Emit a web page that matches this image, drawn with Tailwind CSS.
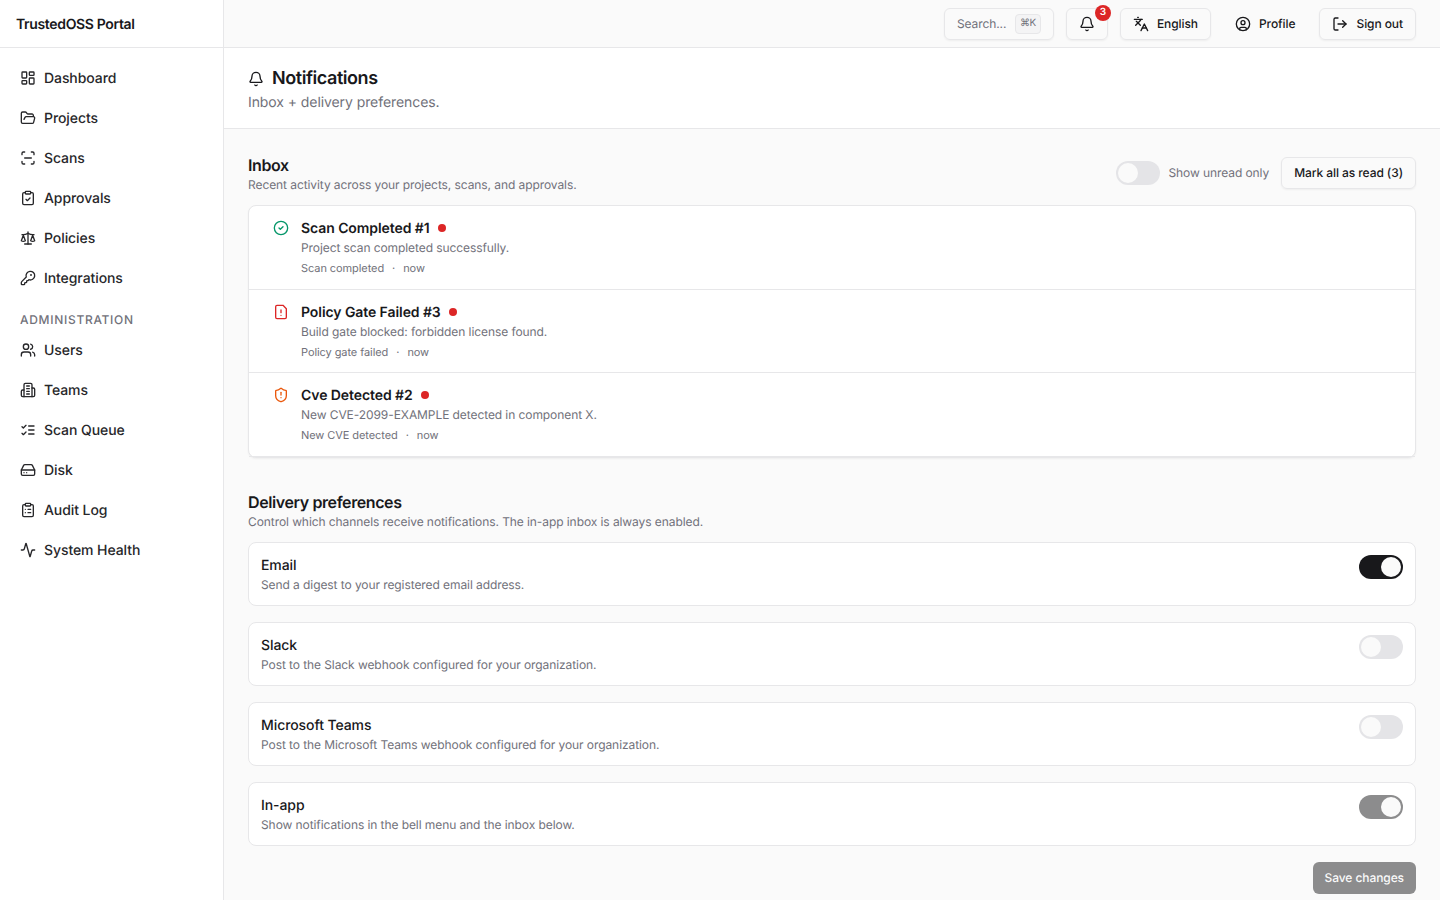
<!DOCTYPE html>
<html lang="en">
<head>
    <meta charset="UTF-8">
    <meta name="viewport" content="width=device-width, initial-scale=1.0">
    <title>Notifications - TrustedOSS Portal</title>
    <script src="https://cdn.jsdelivr.net/npm/@tailwindcss/browser@4"></script>
</head>
<body class="bg-[#fafafa] font-['Inter',sans-serif] [text-rendering:geometricPrecision] tracking-[-0.08px] antialiased text-[#18181b] h-[900px] overflow-hidden">
<div class="flex h-[900px]">

    <!-- Sidebar -->
    <aside class="w-[224px] shrink-0 bg-white border-r border-[#e7e7e9] flex flex-col">
        <div class="h-[48px] pt-[2px] border-b border-[#e7e7e9] flex items-center px-4 text-sm font-semibold tracking-tight">TrustedOSS Portal</div>
        <nav class="pt-[10px] px-2 flex flex-col text-sm font-medium text-[#27272a]">
            <a class="h-10 px-3 flex items-center gap-2"><svg class="size-4 shrink-0" viewBox="0 0 24 24" fill="none" stroke="currentColor" stroke-width="2" stroke-linecap="round" stroke-linejoin="round"><rect x="3" y="3" width="7" height="9" rx="1"/><rect x="14" y="3" width="7" height="5" rx="1"/><rect x="14" y="12" width="7" height="9" rx="1"/><rect x="3" y="16" width="7" height="5" rx="1"/></svg><span class="mt-[2px]">Dashboard</span></a>
            <a class="h-10 px-3 flex items-center gap-2"><svg class="size-4 shrink-0" viewBox="0 0 24 24" fill="none" stroke="currentColor" stroke-width="2" stroke-linecap="round" stroke-linejoin="round"><path d="m6 14 1.5-2.9A2 2 0 0 1 9.24 10H20a2 2 0 0 1 1.94 2.5l-1.54 6a2 2 0 0 1-1.95 1.5H4a2 2 0 0 1-2-2V5a2 2 0 0 1 2-2h3.9a2 2 0 0 1 1.69.9l.81 1.2a2 2 0 0 0 1.67.9H18a2 2 0 0 1 2 2v2"/></svg><span class="mt-[2px]">Projects</span></a>
            <a class="h-10 px-3 flex items-center gap-2"><svg class="size-4 shrink-0" viewBox="0 0 24 24" fill="none" stroke="currentColor" stroke-width="2" stroke-linecap="round" stroke-linejoin="round"><path d="M3 7V5a2 2 0 0 1 2-2h2"/><path d="M17 3h2a2 2 0 0 1 2 2v2"/><path d="M21 17v2a2 2 0 0 1-2 2h-2"/><path d="M7 21H5a2 2 0 0 1-2-2v-2"/><path d="M7 12h10"/></svg><span class="mt-[2px]">Scans</span></a>
            <a class="h-10 px-3 flex items-center gap-2"><svg class="size-4 shrink-0" viewBox="0 0 24 24" fill="none" stroke="currentColor" stroke-width="2" stroke-linecap="round" stroke-linejoin="round"><rect x="8" y="2" width="8" height="4" rx="1"/><path d="M16 4h2a2 2 0 0 1 2 2v14a2 2 0 0 1-2 2H6a2 2 0 0 1-2-2V6a2 2 0 0 1 2-2h2"/><path d="m9 14 2 2 4-4"/></svg><span class="mt-[2px]">Approvals</span></a>
            <a class="h-10 px-3 flex items-center gap-2"><svg class="size-4 shrink-0" viewBox="0 0 24 24" fill="none" stroke="currentColor" stroke-width="2" stroke-linecap="round" stroke-linejoin="round"><path d="m16 16 3-8 3 8c-.87.65-1.92 1-3 1s-2.13-.35-3-1Z"/><path d="m2 16 3-8 3 8c-.87.65-1.92 1-3 1s-2.13-.35-3-1Z"/><path d="M7 21h10"/><path d="M12 3v18"/><path d="M3 7h2c2 0 5-1 7-2 2 1 5 2 7 2h2"/></svg><span class="mt-[2px]">Policies</span></a>
            <a class="h-10 px-3 flex items-center gap-2"><svg class="size-4 shrink-0" viewBox="0 0 24 24" fill="none" stroke="currentColor" stroke-width="2" stroke-linecap="round" stroke-linejoin="round"><path d="M2.586 17.414A2 2 0 0 0 2 18.828V21a1 1 0 0 0 1 1h3a1 1 0 0 0 1-1v-1a1 1 0 0 1 1-1h1a1 1 0 0 0 1-1v-1a1 1 0 0 1 1-1h.172a2 2 0 0 0 1.414-.586l.814-.814a6.5 6.5 0 1 0-4-4z"/><circle cx="16.5" cy="7.5" r=".5" fill="currentColor"/></svg><span class="mt-[2px]">Integrations</span></a>

            <div class="mt-[14px] mb-[2px] h-[16px] px-3 flex items-center text-xs font-medium tracking-[0.7px] text-[#71717a]">ADMINISTRATION</div>

            <a class="h-10 px-3 flex items-center gap-2"><svg class="size-4 shrink-0" viewBox="0 0 24 24" fill="none" stroke="currentColor" stroke-width="2" stroke-linecap="round" stroke-linejoin="round"><path d="M16 21v-2a4 4 0 0 0-4-4H6a4 4 0 0 0-4 4v2"/><circle cx="9" cy="7" r="4"/><path d="M22 21v-2a4 4 0 0 0-3-3.87"/><path d="M16 3.13a4 4 0 0 1 0 7.75"/></svg><span class="mt-[2px]">Users</span></a>
            <a class="h-10 px-3 flex items-center gap-2"><svg class="size-4 shrink-0" viewBox="0 0 24 24" fill="none" stroke="currentColor" stroke-width="2" stroke-linecap="round" stroke-linejoin="round"><path d="M6 22V4a2 2 0 0 1 2-2h8a2 2 0 0 1 2 2v18Z"/><path d="M6 12H4a2 2 0 0 0-2 2v6a2 2 0 0 0 2 2h2"/><path d="M18 9h2a2 2 0 0 1 2 2v9a2 2 0 0 1-2 2h-2"/><path d="M10 6h4"/><path d="M10 10h4"/><path d="M10 14h4"/><path d="M10 18h4"/></svg><span class="mt-[2px]">Teams</span></a>
            <a class="h-10 px-3 flex items-center gap-2"><svg class="size-4 shrink-0" viewBox="0 0 24 24" fill="none" stroke="currentColor" stroke-width="2" stroke-linecap="round" stroke-linejoin="round"><path d="m3 17 2 2 4-4"/><path d="m3 7 2 2 4-4"/><path d="M13 6h8"/><path d="M13 12h8"/><path d="M13 18h8"/></svg><span class="mt-[2px]">Scan Queue</span></a>
            <a class="h-10 px-3 flex items-center gap-2"><svg class="size-4 shrink-0" viewBox="0 0 24 24" fill="none" stroke="currentColor" stroke-width="2" stroke-linecap="round" stroke-linejoin="round"><line x1="22" y1="12" x2="2" y2="12"/><path d="M5.45 5.11 2 12v6a2 2 0 0 0 2 2h16a2 2 0 0 0 2-2v-6l-3.45-6.89A2 2 0 0 0 16.76 4H7.24a2 2 0 0 0-1.79 1.11z"/><line x1="6" y1="16" x2="6.01" y2="16"/><line x1="10" y1="16" x2="10.01" y2="16"/></svg><span class="mt-[2px]">Disk</span></a>
            <a class="h-10 px-3 flex items-center gap-2"><svg class="size-4 shrink-0" viewBox="0 0 24 24" fill="none" stroke="currentColor" stroke-width="2" stroke-linecap="round" stroke-linejoin="round"><rect x="8" y="2" width="8" height="4" rx="1"/><path d="M16 4h2a2 2 0 0 1 2 2v14a2 2 0 0 1-2 2H6a2 2 0 0 1-2-2V6a2 2 0 0 1 2-2h2"/><path d="M12 11h4"/><path d="M12 16h4"/><path d="M8 11h.01"/><path d="M8 16h.01"/></svg><span class="mt-[2px]">Audit Log</span></a>
            <a class="h-10 px-3 flex items-center gap-2"><svg class="size-4 shrink-0" viewBox="0 0 24 24" fill="none" stroke="currentColor" stroke-width="2" stroke-linecap="round" stroke-linejoin="round"><path d="M22 12h-2.48a2 2 0 0 0-1.93 1.46l-2.35 8.36a.25.25 0 0 1-.48 0L9.24 2.18a.25.25 0 0 0-.48 0l-2.35 8.36A2 2 0 0 1 4.49 12H2"/></svg><span class="mt-[2px]">System Health</span></a>
        </nav>
    </aside>

    <div class="flex-1 min-w-0 flex flex-col">
        <!-- Top bar -->
        <header class="h-[48px] shrink-0 border-b border-[#e7e7e9] bg-[#fafafa] flex items-center justify-end gap-3 px-6 text-xs font-medium">
            <div class="w-[110px] h-8 rounded-md border border-[#e7e7e9] flex items-center justify-between px-3 text-[#71717a] font-normal shadow-xs">
                <span>Search...</span>
                <span class="w-[26px] h-5 rounded-sm border border-[#e7e7e9] bg-[#f4f4f5] flex items-center justify-center text-[10px] tracking-[-0.5px]">⌘K</span>
            </div>
            <div class="relative w-[42px] h-8 rounded-md border border-[#e7e7e9] flex items-center justify-center shadow-xs">
                <svg class="size-4" viewBox="0 0 24 24" fill="none" stroke="currentColor" stroke-width="2" stroke-linecap="round" stroke-linejoin="round"><path d="M10.268 21a2 2 0 0 0 3.464 0"/><path d="M3.262 15.326A1 1 0 0 0 4 17h16a1 1 0 0 0 .74-1.673C19.41 13.956 18 12.499 18 8A6 6 0 0 0 6 8c0 4.499-1.411 5.956-2.738 7.326"/></svg>
                <span class="absolute -top-[4px] right-[-4px] size-4 rounded-full bg-[#dc2626] text-white text-[10px] font-semibold flex items-center justify-center">3</span>
            </div>
            <div class="h-8 px-3 rounded-md border border-[#e7e7e9] flex items-center gap-2 shadow-xs">
                <svg class="size-4" viewBox="0 0 24 24" fill="none" stroke="currentColor" stroke-width="2" stroke-linecap="round" stroke-linejoin="round"><path d="m5 8 6 6"/><path d="m4 14 6-6 2-3"/><path d="M2 5h12"/><path d="M7 2h1"/><path d="m22 22-5-10-5 10"/><path d="M14 18h6"/></svg>
                English
            </div>
            <div class="h-8 px-3 rounded-md flex items-center gap-2">
                <svg class="size-4" viewBox="0 0 24 24" fill="none" stroke="currentColor" stroke-width="2" stroke-linecap="round" stroke-linejoin="round"><circle cx="12" cy="12" r="10"/><circle cx="12" cy="10" r="3"/><path d="M7 20.662V19a2 2 0 0 1 2-2h6a2 2 0 0 1 2 2v1.662"/></svg>
                Profile
            </div>
            <div class="h-8 px-3 rounded-md border border-[#e7e7e9] flex items-center gap-2 shadow-xs">
                <svg class="size-4" viewBox="0 0 24 24" fill="none" stroke="currentColor" stroke-width="2" stroke-linecap="round" stroke-linejoin="round"><path d="m16 17 5-5-5-5"/><path d="M21 12H9"/><path d="M9 21H5a2 2 0 0 1-2-2V5a2 2 0 0 1 2-2h4"/></svg>
                Sign out
            </div>
        </header>

        <!-- Page title -->
        <div class="h-[81px] shrink-0 bg-white border-b border-[#e7e7e9] px-6 pt-[17px]">
            <h1 class="flex items-center gap-2 text-lg leading-[28px] font-semibold tracking-tight">
                <svg class="size-4" viewBox="0 0 24 24" fill="none" stroke="currentColor" stroke-width="2" stroke-linecap="round" stroke-linejoin="round"><path d="M10.268 21a2 2 0 0 0 3.464 0"/><path d="M3.262 15.326A1 1 0 0 0 4 17h16a1 1 0 0 0 .74-1.673C19.41 13.956 18 12.499 18 8A6 6 0 0 0 6 8c0 4.499-1.411 5.956-2.738 7.326"/></svg>
                Notifications
            </h1>
            <p class="text-sm leading-[20px] text-[#71717a]">Inbox + delivery preferences.</p>
        </div>

        <main class="flex-1 px-6 pt-6">
            <!-- Inbox -->
            <div class="flex items-center justify-between h-[40px] mb-[12px]">
                <div>
                    <h2 class="text-base leading-[24px] font-semibold tracking-tight">Inbox</h2>
                    <p class="text-xs leading-[16px] text-[#71717a]">Recent activity across your projects, scans, and approvals.</p>
                </div>
                <div class="flex items-center gap-3">
                    <div class="flex items-center gap-2">
                        <span class="w-[44px] h-[24px] rounded-full bg-[#e4e4e7] p-[2px] flex"><span class="size-5 rounded-full bg-[#fafafa]"></span></span>
                        <span class="text-xs text-[#71717a]">Show unread only</span>
                    </div>
                    <div class="h-8 px-3 rounded-md border border-[#e7e7e9] flex items-center text-xs font-medium shadow-xs">Mark all as read (3)</div>
                </div>
            </div>

            <div class="rounded-lg border border-[#e7e7e9] bg-white shadow-xs h-[253px] flex flex-col">
                <div class="h-[84px] border-b border-[#e7e7e9] pl-6 pt-[12px] flex gap-[12px]">
                    <svg class="size-4 mt-[2px] text-[#059669] shrink-0" viewBox="0 0 24 24" fill="none" stroke="currentColor" stroke-width="2" stroke-linecap="round" stroke-linejoin="round"><circle cx="12" cy="12" r="10"/><path d="m9 12 2 2 4-4"/></svg>
                    <div>
                        <div class="h-5 flex items-center gap-2 text-sm leading-[20px] font-semibold"><span class="mt-[2px]">Scan Completed #1</span><span class="size-2 rounded-full bg-[#dc2626]"></span></div>
                        <p class="text-xs leading-[20px] text-[#71717a]">Project scan completed successfully.</p>
                        <p class="text-[11px] leading-[20px] text-[#71717a]">Scan completed<span class="mx-2">·</span>now</p>
                    </div>
                </div>
                <div class="h-[83px] border-b border-[#e7e7e9] pl-6 pt-[12px] flex gap-[12px]">
                    <svg class="size-4 mt-[2px] text-[#dc2626] shrink-0" viewBox="0 0 24 24" fill="none" stroke="currentColor" stroke-width="2" stroke-linecap="round" stroke-linejoin="round"><path d="M15 2H6a2 2 0 0 0-2 2v16a2 2 0 0 0 2 2h12a2 2 0 0 0 2-2V7Z"/><path d="M12 9v4"/><path d="M12 17h.01"/></svg>
                    <div>
                        <div class="h-5 flex items-center gap-2 text-sm leading-[20px] font-semibold"><span class="mt-[2px]">Policy Gate Failed #3</span><span class="size-2 rounded-full bg-[#dc2626]"></span></div>
                        <p class="text-xs leading-[20px] text-[#71717a]">Build gate blocked: forbidden license found.</p>
                        <p class="text-[11px] leading-[20px] text-[#71717a]">Policy gate failed<span class="mx-2">·</span>now</p>
                    </div>
                </div>
                <div class="flex-1 border-b border-[#e7e7e9] pl-6 pt-[12px] flex gap-[12px]">
                    <svg class="size-4 mt-[2px] text-[#ea580c] shrink-0" viewBox="0 0 24 24" fill="none" stroke="currentColor" stroke-width="2" stroke-linecap="round" stroke-linejoin="round"><path d="M20 13c0 5-3.5 7.5-7.66 8.95a1 1 0 0 1-.67-.01C7.5 20.5 4 18 4 13V6a1 1 0 0 1 1-1c2 0 4.5-1.2 6.24-2.72a1.17 1.17 0 0 1 1.52 0C14.51 3.81 17 5 19 5a1 1 0 0 1 1 1z"/><path d="M12 8v4"/><path d="M12 16h.01"/></svg>
                    <div>
                        <div class="h-5 flex items-center gap-2 text-sm leading-[20px] font-semibold"><span class="mt-[2px]">Cve Detected #2</span><span class="size-2 rounded-full bg-[#dc2626]"></span></div>
                        <p class="text-xs leading-[20px] text-[#71717a]">New CVE-2099-EXAMPLE detected in component X.</p>
                        <p class="text-[11px] leading-[20px] text-[#71717a]">New CVE detected<span class="mx-2">·</span>now</p>
                    </div>
                </div>
            </div>

            <!-- Delivery preferences -->
            <div class="mt-[32px]">
                <h2 class="text-base leading-[24px] font-semibold tracking-tight">Delivery preferences</h2>
                <p class="text-xs leading-[16px] text-[#71717a]">Control which channels receive notifications. The in-app inbox is always enabled.</p>
            </div>

            <div class="mt-[12px] flex flex-col gap-4">
                <div class="h-16 rounded-lg border border-[#e7e7e9] bg-white px-3 pt-3 flex justify-between">
                    <div>
                        <div class="h-5 pt-px text-sm leading-[20px] font-medium">Email</div>
                        <p class="text-xs leading-[20px] text-[#71717a]">Send a digest to your registered email address.</p>
                    </div>
                    <span class="w-[44px] h-[24px] rounded-full bg-[#18181b] p-[2px] flex justify-end"><span class="size-5 rounded-full bg-[#fafafa]"></span></span>
                </div>
                <div class="h-16 rounded-lg border border-[#e7e7e9] bg-white px-3 pt-3 flex justify-between">
                    <div>
                        <div class="h-5 pt-px text-sm leading-[20px] font-medium">Slack</div>
                        <p class="text-xs leading-[20px] text-[#71717a]">Post to the Slack webhook configured for your organization.</p>
                    </div>
                    <span class="w-[44px] h-[24px] rounded-full bg-[#e4e4e7] p-[2px] flex"><span class="size-5 rounded-full bg-[#fafafa]"></span></span>
                </div>
                <div class="h-16 rounded-lg border border-[#e7e7e9] bg-white px-3 pt-3 flex justify-between">
                    <div>
                        <div class="h-5 pt-px text-sm leading-[20px] font-medium">Microsoft Teams</div>
                        <p class="text-xs leading-[20px] text-[#71717a]">Post to the Microsoft Teams webhook configured for your organization.</p>
                    </div>
                    <span class="w-[44px] h-[24px] rounded-full bg-[#e4e4e7] p-[2px] flex"><span class="size-5 rounded-full bg-[#fafafa]"></span></span>
                </div>
                <div class="h-16 rounded-lg border border-[#e7e7e9] bg-white px-3 pt-3 flex justify-between">
                    <div>
                        <div class="h-5 pt-px text-sm leading-[20px] font-medium">In-app</div>
                        <p class="text-xs leading-[20px] text-[#71717a]">Show notifications in the bell menu and the inbox below.</p>
                    </div>
                    <span class="w-[44px] h-[24px] rounded-full bg-[#8c8c8d] p-[2px] flex justify-end"><span class="size-5 rounded-full bg-[#fafafa]"></span></span>
                </div>
            </div>

            <div class="mt-4 flex justify-end">
                <div class="h-8 px-3 rounded-md bg-[#8c8c8d] text-[#fafafa] text-xs font-medium flex items-center">Save changes</div>
            </div>
        </main>
    </div>
</div>
</body>
</html>
